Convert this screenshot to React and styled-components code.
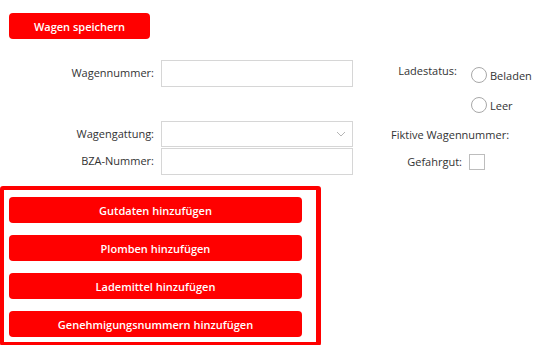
import React from 'react';
import styled, { createGlobalStyle } from 'styled-components';

const GlobalStyle = createGlobalStyle`
    html, body {
        margin: 0;
        padding: 0;
        background: #fff;
    }
    body {
        font-family: "Open Sans", "Liberation Sans", sans-serif;
        font-size: 11px;
        color: #333;
    }
`;

const App = () => {
    return (
        <Page>
            <GlobalStyle />
            <SaveButton type="button">Wagen speichern</SaveButton>

            <FormGrid>
                <Label>Wagennummer:</Label>
                <TextInput type="text" />
                <Label second top>Ladestatus:</Label>
                <RadioGroup>
                    <RadioRow>
                        <RadioCircle />
                        Beladen
                    </RadioRow>
                    <RadioRow>
                        <RadioCircle />
                        Leer
                    </RadioRow>
                </RadioGroup>

                <Label>Wagengattung:</Label>
                <SelectBox>
                    <Chevron width="10" height="6" viewBox="0 0 10 6">
                        <path d="M1 1 L5 5 L9 1" fill="none" stroke="#b5b5b5" strokeWidth="1" />
                    </Chevron>
                </SelectBox>
                <WideLabel>Fiktive Wagennummer:</WideLabel>

                <Label>BZA-Nummer:</Label>
                <TextInput type="text" />
                <Label second>Gefahrgut:</Label>
                <CheckBox />
            </FormGrid>

            <ActionBox>
                <ActionButton type="button">Gutdaten hinzufügen</ActionButton>
                <ActionButton type="button">Plomben hinzufügen</ActionButton>
                <ActionButton type="button">Lademittel hinzufügen</ActionButton>
                <ActionButton type="button">Genehmigungsnummern hinzufügen</ActionButton>
            </ActionBox>
        </Page>
    );
};

// Styled Components
const Page = styled.div`
    width: 550px;
    height: 345px;
    overflow: hidden;
    padding-top: 13px;
    box-sizing: border-box;
`;

const RedButton = styled.button`
    background: #ff0000;
    color: #fff;
    border: none;
    border-radius: 4px;
    font-family: "Open Sans", "Liberation Sans", sans-serif;
    font-weight: 600;
    font-size: 11px;
    height: 26px;
    padding: 0;
    cursor: pointer;
`;

const SaveButton = styled(RedButton)`
    display: block;
    width: 141px;
    margin-left: 9px;
`;

const FormGrid = styled.div`
    display: grid;
    grid-template-columns: 154px 192px 102px auto;
    column-gap: 7px;
    row-gap: 1px;
    margin-top: 21px;
    align-items: center;
`;

const Label = styled.div`
    text-align: right;
    white-space: nowrap;
    align-self: ${props => props.second ? 'center' : 'start'};
    line-height: ${props => props.top ? '22px' : '26px'};
    padding-right: ${props => props.second && props.top ? '5px' : '0'};
    ${props => props.top && 'align-self: start;'}
`;

const WideLabel = styled.div`
    grid-column: 3 / span 2;
    white-space: nowrap;
    padding-left: 31px;
`;

const TextInput = styled.input`
    box-sizing: border-box;
    width: 192px;
    height: 27px;
    border: 1px solid #d6d6d6;
    margin: 0;
    padding: 0 6px;
    align-self: start;
`;

const SelectBox = styled.div`
    box-sizing: border-box;
    width: 192px;
    height: 26px;
    border: 1px solid #d6d6d6;
    display: flex;
    align-items: center;
    justify-content: flex-end;
    padding-right: 6px;
`;

const Chevron = styled.svg`
    display: block;
`;

const RadioGroup = styled.div`
    display: flex;
    flex-direction: column;
    align-self: start;
`;

const RadioRow = styled.label`
    display: flex;
    align-items: center;
    gap: 3px;
    height: 30px;
    padding-left: 2px;
`;

const RadioCircle = styled.span`
    box-sizing: border-box;
    width: 16px;
    height: 16px;
    border-radius: 50%;
    border: 1px solid #a8a8a8;
    background: #fff;
`;

const CheckBox = styled.span`
    box-sizing: border-box;
    display: block;
    width: 16px;
    height: 16px;
    border: 1px solid #bdbdbd;
`;

const ActionBox = styled.div`
    box-sizing: border-box;
    width: 321px;
    margin-top: 11px;
    border: 4px solid #ff0000;
    border-right-width: 5px;
    border-radius: 3px;
    padding: 7px 14px 5px 5px;
    display: flex;
    flex-direction: column;
    gap: 12px;
`;

const ActionButton = styled(RedButton)`
    width: 100%;
    height: 26px;
`;

export default App;
